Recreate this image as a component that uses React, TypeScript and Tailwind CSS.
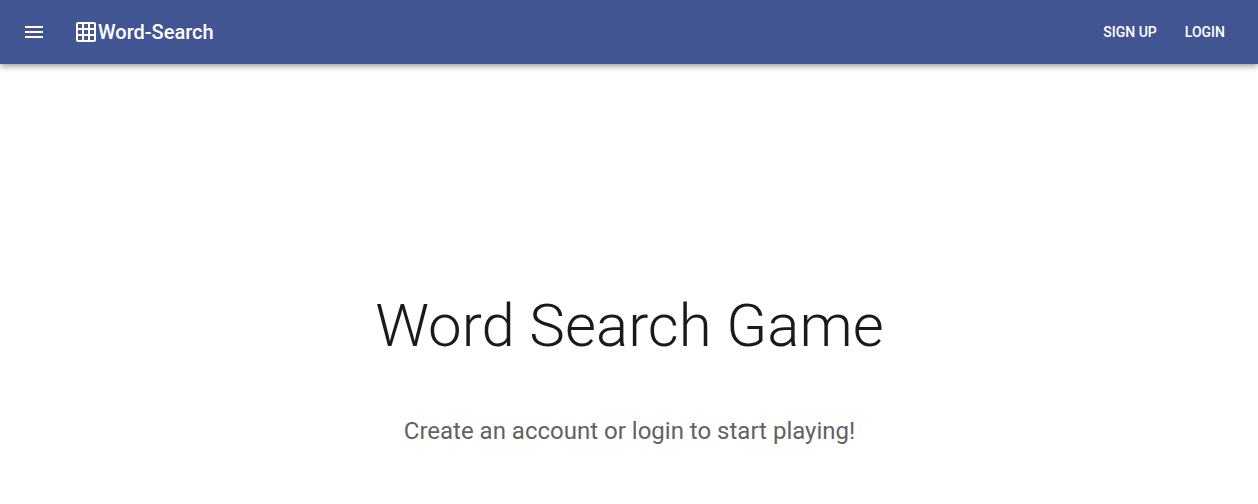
export default function App() {
  return (
    <div className="min-h-[504px] bg-white font-['Roboto',sans-serif] overflow-hidden">
      <header className="h-16 bg-[#425593] text-white flex items-center pl-6 pr-[25px] shadow-[0_2px_4px_-1px_rgba(0,0,0,0.2),0_4px_5px_0_rgba(0,0,0,0.14),0_1px_10px_0_rgba(0,0,0,0.12)]">
        <svg width="24" height="24" viewBox="0 0 24 24" fill="white" className="-ml-[2px]">
          <path d="M3 18h18v-2H3v2zm0-5h18v-2H3v2zm0-7v2h18V6H3z" />
        </svg>
        <div className="flex items-center ml-[30px]">
          <svg width="24" height="24" viewBox="0 0 24 24" fill="white" className="-ml-[2px]">
            <path d="M20 2H4c-1.1 0-2 .9-2 2v16c0 1.1.9 2 2 2h16c1.1 0 2-.9 2-2V4c0-1.1-.9-2-2-2zM8 20H4v-4h4v4zm0-6H4v-4h4v4zm0-6H4V4h4v4zm6 12h-4v-4h4v4zm0-6h-4v-4h4v4zm0-6h-4V4h4v4zm6 12h-4v-4h4v4zm0-6h-4v-4h4v4zm0-6h-4V4h4v4z" />
          </svg>
          <span className="text-[20px] font-medium leading-8">Word-Search</span>
        </div>
        <div className="ml-auto flex items-center gap-2">
          <button className="px-2 py-[6px] text-[14px] font-medium uppercase leading-6 mr-[4px]">Sign Up</button>
          <button className="px-2 py-[6px] text-[14px] font-medium uppercase leading-6">Login</button>
        </div>
      </header>
      <main className="flex flex-col items-center pl-[1px]">
        <h1 className="mt-[226px] text-[60px] font-light leading-[72px] text-[#1a1a1a]">Word Search Game</h1>
        <p className="mt-[53px] text-[24px] font-normal leading-8 text-[#626262]">Create an account or login to start playing!</p>
      </main>
    </div>
  );
}
